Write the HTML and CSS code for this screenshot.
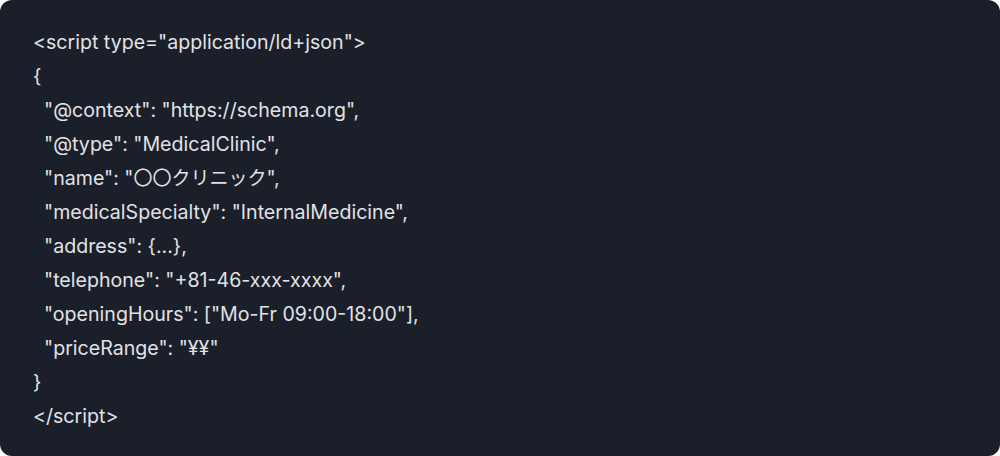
FILE: index.html
```html
<!DOCTYPE html>
<html lang="ja">
<head>
<meta charset="utf-8">
<link rel="stylesheet" href="styles.css">
</head>
<body>
<div class="card">
  <div class="code">
    <div class="line">&lt;script type="application/ld+json"&gt;</div>
    <div class="line">{</div>
    <div class="line">  "@context": "https://schema.org",</div>
    <div class="line">  "@type": "MedicalClinic",</div>
    <div class="line">  "name": "<span class="ja">〇〇クリニック</span>",</div>
    <div class="line">  "medicalSpecialty": "InternalMedicine",</div>
    <div class="line">  "address": {...},</div>
    <div class="line">  "telephone": "+81-46-xxx-xxxx",</div>
    <div class="line">  "openingHours": ["Mo-Fr 09:00-18:00"],</div>
    <div class="line">  "priceRange": "¥¥"</div>
    <div class="line">}</div>
    <div class="line">&lt;/script&gt;</div>
  </div>
</div>
</body>
</html>
```
FILE: styles.css
```css
html, body {
  margin: 0;
  padding: 0;
  background: #ffffff;
}
.card {
  width: 1000px;
  height: 456px;
  box-sizing: border-box;
  background: #1b1f29;
  border-radius: 12px;
  padding: 25px 33px 24px;
}
.code {
  display: flex;
  flex-direction: column;
  font-family: Inter, "Noto Sans CJK JP", sans-serif;
  font-size: 19.6px;
  font-weight: 400;
  color: #e0e2e6;
}
.line {
  height: 34px;
  line-height: 34px;
  white-space: pre;
}
.ja {
  font-size: 19px;
  line-height: 1;
}
```
